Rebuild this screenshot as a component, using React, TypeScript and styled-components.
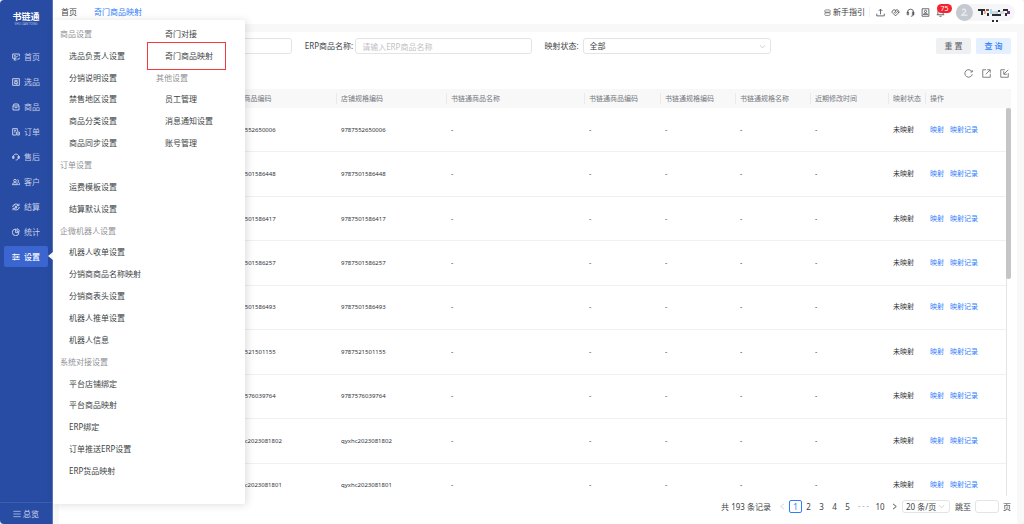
import React from "react";
import styled, { createGlobalStyle, css } from "styled-components";

const colors = {
  brand: "#284ba3",
  brandActive: "#3b66d0",
  link: "#2f7dfb",
  text: "#3c3f45",
  muted: "#8f9196",
  line: "#e3e4e6",
  ground: "#f8f8f9",
};

const GlobalStyle = createGlobalStyle`
  *, *::before, *::after { box-sizing: border-box; }
  html, body { margin: 0; height: 100%; }
  body {
    font-family: "Noto Sans", "Noto Sans CJK SC", sans-serif;
    font-size: 8px;
    line-height: 12px;
    color: ${colors.text};
    background: #f0f1f3;
  }
  button, input, select { font: inherit; color: inherit; margin: 0; }
  button { cursor: pointer; border: 0; padding: 0; background: none; }
  a { color: inherit; text-decoration: none; }
`;

const Shell = styled.div`
  display: flex;
  height: 100vh;
  border-radius: 4px;
  overflow: hidden;
  background: ${colors.ground};
`;

const Sidebar = styled.aside`
  flex: 0 0 53px;
  display: flex;
  flex-direction: column;
  position: relative;
  background: ${colors.brand};
  border-right: 1px solid #5a76bb;
  color: #c3cee8;
`;

const Logo = styled.div`
  height: 46px;
  padding-top: 11px;
  display: flex;
  flex-direction: column;
  align-items: center;
  color: #fff;
`;

const LogoName = styled.strong`
  font-size: 9px;
  line-height: 12px;
`;

const LogoSub = styled.span`
  font-size: 3px;
  line-height: 3px;
  color: #b9c6e6;
`;

const NavList = styled.nav`
  flex: 1;
  display: flex;
  flex-direction: column;
  gap: 4px;
  padding: 0 4px;
`;

const NavItem = styled.a<{ $active?: boolean }>`
  position: relative;
  display: flex;
  align-items: center;
  gap: 4px;
  height: 21px;
  padding-left: 8px;
  border-radius: 2px;
  ${(p) =>
    p.$active &&
    css`
      background: ${colors.brandActive};
      color: #fff;
      font-weight: 500;
      &::after {
        content: "";
        position: absolute;
        right: -5px;
        top: 6px;
        border: 4px solid transparent;
        border-left: 0;
        border-right: 5px solid #fff;
      }
    `}
`;

const Overview = styled.button`
  display: flex;
  align-items: center;
  justify-content: center;
  gap: 2px;
  height: 22px;
  border-top: 1px solid #3d5dae;
  color: #d5dcee;
`;

const Main = styled.div`
  flex: 1;
  min-width: 0;
  display: flex;
  flex-direction: column;
  position: relative;
`;

const TopBar = styled.header`
  display: flex;
  align-items: center;
  height: 24px;
  flex: none;
  padding: 0 9px 0 8px;
  background: #fff;
`;

const Tabs = styled.nav`
  display: flex;
  gap: 17px;
  flex: 1;
`;

const Tab = styled.a<{ $active?: boolean }>`
  color: ${(p) => (p.$active ? colors.link : colors.text)};
`;

const Guide = styled.a`
  display: flex;
  align-items: center;
  gap: 2px;
  padding-right: 4px;
  border-right: 1px solid #eeeff1;
  line-height: 10px;
`;

const Tools = styled.div`
  display: flex;
  gap: 6px;
  padding: 0 11px 0 6px;
`;

const ToolButton = styled.button`
  position: relative;
  display: flex;
  width: 9px;
  height: 9px;
`;

const Badge = styled.span`
  position: absolute;
  left: 1px;
  top: -4px;
  width: 15px;
  height: 9px;
  border-radius: 5px;
  background: #f5222d;
  color: #fff;
  font-size: 7px;
  line-height: 9px;
  text-align: center;
`;

const User = styled.button`
  display: flex;
  align-items: center;
  gap: 5px;
  width: 59px;
  height: 17px;
  border-radius: 9px;
  background: #f6f6f8;
`;

const Avatar = styled.span`
  display: flex;
  align-items: center;
  justify-content: center;
  flex: none;
  width: 17px;
  height: 17px;
  border-radius: 50%;
  background: #c5c9d0;
  color: #eef0f3;
`;

const Card = styled.main`
  flex: 1;
  min-height: 0;
  display: flex;
  flex-direction: column;
  margin: 8px 7px 0 6px;
  padding: 6px 6px 11px;
  background: #fff;
`;

const Filters = styled.form`
  display: grid;
  grid-template-columns: repeat(4, 1fr);
  gap: 13px;
`;

const Field = styled.div`
  display: flex;
  align-items: center;
  gap: 2px;
`;

const FieldLabel = styled.label<{ $width: number }>`
  flex: 0 0 ${(p) => p.$width}px;
  white-space: nowrap;
`;

const controlBox = css`
  border: 1px solid ${colors.line};
  border-radius: 3px;
  background: #fff;
  outline: 0;
  appearance: none;
  min-width: 0;
`;

const TextInput = styled.input`
  ${controlBox}
  flex: 1;
  height: 16px;
  padding: 0 6px;
  &::placeholder {
    color: #bfc1c5;
  }
`;

const SelectWrap = styled.span`
  position: relative;
  display: flex;
  flex: 1;
  min-width: 0;
`;

const Select = styled.select<{ $compact?: boolean }>`
  ${controlBox}
  width: 100%;
  height: ${(p) => (p.$compact ? 13 : 16)}px;
  padding: 0 ${(p) => (p.$compact ? 3 : 6)}px;
`;

const Caret = styled.span`
  position: absolute;
  right: 5px;
  top: 0;
  bottom: 0;
  display: flex;
  align-items: center;
  color: #b5b7bb;
  pointer-events: none;
`;

const Actions = styled.div`
  display: flex;
  justify-content: flex-end;
  gap: 5px;
`;

const ActionButton = styled.button<{ $primary?: boolean }>`
  width: 35px;
  height: 16px;
  border-radius: 2px;
  background: ${(p) => (p.$primary ? "#e4f0ff" : "#eff0f2")};
  color: ${(p) => (p.$primary ? colors.link : "#6a6d73")};
  font-weight: 500;
`;

const TableTools = styled.div`
  display: flex;
  align-items: center;
  justify-content: flex-end;
  gap: 9px;
  height: 35px;
  padding: 3px 2px 0 0;
  flex: none;
  color: #55585e;
`;

const TableArea = styled.div`
  flex: 1;
  min-height: 0;
  position: relative;
  overflow: hidden;
`;

const Table = styled.table`
  width: 100%;
  height: calc(100% + 12px);
  table-layout: fixed;
  border-spacing: 0;
  font-size: 7px;
  line-height: 10px;
  color: #2f3237;
`;

const HeadCell = styled.th<{ $divider?: boolean }>`
  height: 19px;
  padding: 0 5px;
  background: ${colors.ground};
  color: #75787e;
  font-weight: 400;
  text-align: left;
  white-space: nowrap;
  background-image: ${(p) => (p.$divider ? "linear-gradient(#e9eaec, #e9eaec)" : "none")};
  background-size: 1px 11px;
  background-position: left center;
  background-repeat: no-repeat;
`;

const Cell = styled.td`
  padding: 0 5px;
  border-bottom: 1px solid #f0f0f1;
  white-space: nowrap;
`;

const Code = styled.span`
  font-size: 6px;
`;

const RowLink = styled.a`
  color: ${colors.link};
  margin-right: 6px;
`;

const ScrollTrack = styled.div`
  position: absolute;
  top: 19px;
  right: 0;
  bottom: 0;
  width: 5px;
  border-left: 1px solid ${colors.line};
  background: #fff;
`;

const ScrollThumb = styled.div`
  height: 44%;
  margin-left: -1px;
  border-radius: 2px;
  background: #c4c5c7;
`;

const Pager = styled.nav`
  display: flex;
  align-items: center;
  justify-content: flex-end;
  height: 13px;
  margin-top: 4px;
  flex: none;
`;

const PagerButton = styled.button<{ $current?: boolean; $width?: number }>`
  display: flex;
  align-items: center;
  justify-content: center;
  width: ${(p) => p.$width ?? 13}px;
  height: 13px;
  border-radius: 2px;
  border: 1px solid ${(p) => (p.$current ? colors.link : "transparent")};
  color: ${(p) => (p.$current ? colors.link : "inherit")};
`;

const PagerTotal = styled.span`
  margin-right: 5px;
`;

const PageSize = styled.span`
  display: flex;
  width: 48px;
  margin: 0 5px 0 1px;
`;

const Jump = styled.label`
  display: flex;
  align-items: center;
  gap: 4px;
`;

const JumpInput = styled.input`
  ${controlBox}
  width: 24px;
  height: 13px;
`;

const Menu = styled.div`
  position: absolute;
  left: 0;
  top: 20px;
  bottom: 20px;
  width: 192px;
  display: grid;
  grid-template-rows: repeat(21, 1fr);
  grid-template-columns: 96px 1fr;
  grid-auto-flow: column;
  align-items: center;
  padding: 3px 0 22px 7px;
  background: #fff;
  border-radius: 0 2px 2px 0;
  box-shadow: 2px 1px 8px rgba(0, 0, 0, 0.13);
`;

const MenuTitle = styled.span`
  color: ${colors.muted};
`;

const MenuLink = styled.a<{ $marked?: boolean }>`
  position: relative;
  padding-left: 9px;
  ${(p) =>
    p.$marked &&
    css`
      &::after {
        content: "";
        position: absolute;
        left: -9px;
        top: -8px;
        width: 79px;
        height: 28px;
        border: 1px solid #f5393d;
      }
    `}
`;

type IconProps = { size?: number; weight?: number; children: React.ReactNode };

const Icon = ({ size = 8, weight = 2, children }: IconProps) => (
  <svg
    width={size}
    height={size}
    viewBox="0 0 24 24"
    fill="none"
    stroke="currentColor"
    strokeWidth={weight}
    aria-hidden="true"
  >
    {children}
  </svg>
);

const navItems: { label: string; icon: React.ReactNode }[] = [
  { label: "首页", icon: <path d="M13 16H2V3h20v7M5 21h8M8 16v5M6 8h5M6 12h8l3-4M15 20l3-3 2 2 3-5" /> },
  { label: "选品", icon: <path d="M2 2h20v20H2zM7 7h10M8 11h8v6H8zM12 17l4 3" /> },
  { label: "商品", icon: <path d="M3 9h18v12H3zM3 9l3-6h12l3 6M8 14h8" /> },
  { label: "订单", icon: <path d="M12 21H2V2h14v8M6 7h6M6 12h5M14 12h8v9h-8zM18 15v3" /> },
  { label: "售后", icon: <path d="M5 15a8 8 0 1 1 14 0M2 10h4v6H2zM18 10h4v6h-4zM19 16c-1 4-4 5-8 5" /> },
  { label: "客户", icon: <path d="M9 4a4 4 0 1 1 0 8 4 4 0 0 1 0-8zM1 20c0-8 16-8 16 0zM16 5c5 0 5 6 1 7 4 1 6 3 6 8h-4" /> },
  { label: "结算", icon: <path d="M20 7a10 10 0 0 0-18 5M4 17a10 10 0 0 0 18-5M8 7l4 5 4-5M12 12v6M8 13h8M21 2v6h-6M3 22v-6h6" /> },
  { label: "统计", icon: <path d="M11 3a10 10 0 1 0 10 11H11zM15 2c4 1 7 4 7 8h-7z" /> },
  { label: "设置", icon: <path d="M1 5h22M1 12h22M1 19h22M8 2v6M16 9v6M8 16v6" /> },
];

const menuGroups: [string, string[]][] = [
  ["商品设置", ["选品负责人设置", "分销说明设置", "禁售地区设置", "商品分类设置", "商品同步设置"]],
  ["订单设置", ["运费模板设置", "结算默认设置"]],
  ["企微机器人设置", ["机器人收单设置", "分销商商品名称映射", "分销商表头设置", "机器人推单设置", "机器人信息"]],
  ["系统对接设置", ["平台店铺绑定", "平台商品映射", "ERP绑定", "订单推送ERP设置", "ERP货品映射"]],
];

const columns = [
  { title: "", width: 161 },
  { title: "ERP商品编码", width: 110 },
  { title: "店铺规格编码", width: 110 },
  { title: "书链通商品名称", width: 138 },
  { title: "书链通商品编码", width: 76 },
  { title: "书链通规格编码", width: 75 },
  { title: "书链通规格名称", width: 75 },
  { title: "近期修改时间", width: 78 },
  { title: "映射状态", width: 37 },
  { title: "操作", width: 86 },
];

const codes = [
  "9787552650006",
  "9787501586448",
  "9787501586417",
  "9787501586257",
  "9787501586493",
  "9787521501155",
  "9787576039764",
  "qyxhc2023081802",
  "qyxhc2023081801",
];

const tools: { label: string; icon: React.ReactNode; badge?: number }[] = [
  { label: "上传", icon: <path d="M2 15v6h20v-6M12 17V4M7 8l5-5 5 5" /> },
  { label: "收藏", icon: <path d="M12 21 2 11l4-6h5l2 3-4 4 3 2 5-5 4 4M13 5h5l4 6-10 10" /> },
  { label: "客服", icon: <path d="M4 14V11a8 8 0 0 1 16 0v6c0 3-3 5-7 5M3 11h4v7H3zM17 11h4v7h-4z" /> },
  { label: "联系人", icon: <path d="M3 2h18v20H3zM12 6a3 3 0 1 1 0 6 3 3 0 0 1 0-6zM6 17c3-4 9-4 12 0z" /> },
  { label: "消息", badge: 75, icon: <path d="M5 18V10a7 7 0 0 1 14 0v8M2 18h20M9 22h6" /> },
];

const Chevron = () => (
  <Icon size={7}>
    <path d="M3 7l9 10 9-10" />
  </Icon>
);

const MaskedName = () => (
  <svg width="33" height="22" viewBox="0 -6 33 22" aria-hidden="true">
    <path fill="#2b2c30" d="M0 2h7v2H5v4H3V4H0zM9 6h2v3H9zM14 7h9v2h-9zM20 3h2v2h-2zM25 2h5v2h-5zM27 6h2v3h-2zM14 13h2v2h-2zM18 13h2v2h-2z" />
    <path fill="#efb18a" d="M6 4h2v3H6z" />
    <path fill="#8d5b3f" d="M8 2h3v2H8z" />
    <path fill="#a7dcf5" d="M12 2h2v5h-2zM18 4h2v3h-2z" />
    <path fill="#d5d8dc" d="M14 4h4v3h-4zM22 4h4v3h-4z" />
    <path fill="#73318b" d="M29 4h3v3h-3z" />
  </svg>
);

export default function App() {
  return (
    <>
      <GlobalStyle />
      <Shell>
        <Sidebar>
          <Logo>
            <LogoName>书链通</LogoName>
            <LogoSub>SHU LIAN TONG</LogoSub>
          </Logo>
          <NavList>
            {navItems.map((item) => (
              <NavItem key={item.label} href="#" $active={item.label === "设置"}>
                <Icon weight={3}>{item.icon}</Icon>
                {item.label}
              </NavItem>
            ))}
          </NavList>
          <Overview type="button">
            <Icon>
              <path d="M1 4h22M1 12h22M1 20h22" />
            </Icon>
            总览
          </Overview>
        </Sidebar>

        <Main>
          <TopBar>
            <Tabs>
              <Tab href="#">首页</Tab>
              <Tab href="#" $active>
                奇门商品映射
              </Tab>
            </Tabs>
            <Guide href="#">
              <Icon size={7}>
                <path d="M5 3h14l3 4-3 4H3V5zM5 13h16v6l-2 3H5l-3-4z" />
              </Icon>
              新手指引
            </Guide>
            <Tools>
              {tools.map((tool) => (
                <ToolButton key={tool.label} type="button" aria-label={tool.label}>
                  <Icon size={9}>{tool.icon}</Icon>
                  {tool.badge && <Badge>{tool.badge}</Badge>}
                </ToolButton>
              ))}
            </Tools>
            <User type="button" aria-label="账号">
              <Avatar>
                <Icon size={9} weight={3}>
                  <path d="M6 6c3-5 11-3 9 3L5 19h15" />
                </Icon>
              </Avatar>
              <MaskedName />
            </User>
          </TopBar>

          <Card>
            <Filters>
              <Field>
                <FieldLabel $width={48} htmlFor="code">ERP商品编码:</FieldLabel>
                <TextInput id="code" />
              </Field>
              <Field>
                <FieldLabel $width={48} htmlFor="name">ERP商品名称:</FieldLabel>
                <TextInput id="name" placeholder="请输入ERP商品名称" />
              </Field>
              <Field>
                <FieldLabel $width={36} htmlFor="status">映射状态:</FieldLabel>
                <SelectWrap>
                  <Select id="status">
                    <option>全部</option>
                  </Select>
                  <Caret>
                    <Chevron />
                  </Caret>
                </SelectWrap>
              </Field>
              <Actions>
                <ActionButton type="reset">重 置</ActionButton>
                <ActionButton type="button" $primary>
                  查 询
                </ActionButton>
              </Actions>
            </Filters>

            <TableTools>
              <ToolButton type="button" aria-label="刷新">
                <Icon size={9}>
                  <path d="M21 7a10 10 0 1 0 1 7M22 3v5h-5" />
                </Icon>
              </ToolButton>
              <ToolButton type="button" aria-label="导出">
                <Icon size={9}>
                  <path d="M11 2H2v20h20v-9M10 14 21 3M14 2h8v8" />
                </Icon>
              </ToolButton>
              <ToolButton type="button" aria-label="导入">
                <Icon size={9}>
                  <path d="M13 2H2v20h20V11M22 2 11 13M10 6v8h8" />
                </Icon>
              </ToolButton>
            </TableTools>

            <TableArea>
              <Table>
                <colgroup>
                  {columns.map((c, i) => (
                    <col key={i} width={c.width} />
                  ))}
                </colgroup>
                <thead>
                  <tr>
                    {columns.map((c, i) => (
                      <HeadCell key={i} $divider={i > 0}>
                        {c.title}
                      </HeadCell>
                    ))}
                  </tr>
                </thead>
                <tbody>
                  {codes.map((code) => (
                    <tr key={code}>
                      <Cell />
                      <Cell>
                        <Code>{code}</Code>
                      </Cell>
                      <Cell>
                        <Code>{code}</Code>
                      </Cell>
                      <Cell>-</Cell>
                      <Cell>-</Cell>
                      <Cell>-</Cell>
                      <Cell>-</Cell>
                      <Cell>-</Cell>
                      <Cell>未映射</Cell>
                      <Cell>
                        <RowLink href="#">映射</RowLink>
                        <RowLink href="#">映射记录</RowLink>
                      </Cell>
                    </tr>
                  ))}
                </tbody>
              </Table>
              <ScrollTrack>
                <ScrollThumb />
              </ScrollTrack>
            </TableArea>

            <Pager aria-label="分页">
              <PagerTotal>共 193 条记录</PagerTotal>
              <PagerButton type="button" aria-label="上一页" disabled>
                <Icon size={7}>
                  <path d="M17 3 6 12l11 9" stroke="#b5b7bb" />
                </Icon>
              </PagerButton>
              <PagerButton type="button" $current>1</PagerButton>
              <PagerButton type="button">2</PagerButton>
              <PagerButton type="button">3</PagerButton>
              <PagerButton type="button">4</PagerButton>
              <PagerButton type="button">5</PagerButton>
              <PagerButton type="button" $width={18} aria-label="更多页">
                <Icon size={11}>
                  <path d="M1 12h4M10 12h4M19 12h4" stroke="#b5b7bb" />
                </Icon>
              </PagerButton>
              <PagerButton type="button" $width={16}>10</PagerButton>
              <PagerButton type="button" aria-label="下一页">
                <Icon size={7} weight={3}>
                  <path d="M7 3l11 9-11 9" />
                </Icon>
              </PagerButton>
              <PageSize>
                <SelectWrap>
                  <Select $compact aria-label="每页条数">
                    <option>20 条/页</option>
                  </Select>
                  <Caret>
                    <Chevron />
                  </Caret>
                </SelectWrap>
              </PageSize>
              <Jump>
                跳至
                <JumpInput />
                页
              </Jump>
            </Pager>
          </Card>

          <Menu>
            {menuGroups.map(([title, links]) => (
              <React.Fragment key={title}>
                <MenuTitle>{title}</MenuTitle>
                {links.map((label) => (
                  <MenuLink key={label} href="#">
                    {label}
                  </MenuLink>
                ))}
              </React.Fragment>
            ))}
            <MenuLink href="#">奇门对接</MenuLink>
            <MenuLink href="#" $marked>
              奇门商品映射
            </MenuLink>
            <MenuTitle>其他设置</MenuTitle>
            <MenuLink href="#">员工管理</MenuLink>
            <MenuLink href="#">消息通知设置</MenuLink>
            <MenuLink href="#">账号管理</MenuLink>
          </Menu>
        </Main>
      </Shell>
    </>
  );
}
